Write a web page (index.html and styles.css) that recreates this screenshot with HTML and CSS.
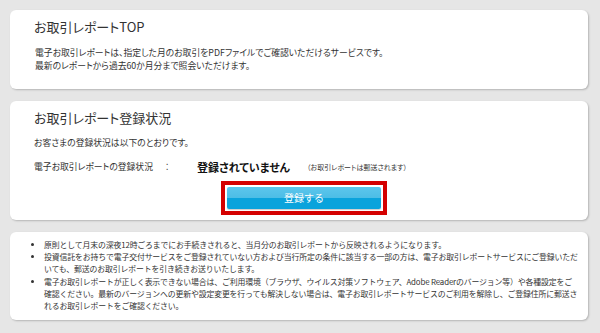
FILE: index.html
```html
<!DOCTYPE html>
<html lang="ja">
<head>
<meta charset="utf-8">
<link rel="stylesheet" href="styles.css">
</head>
<body>
<div class="page">
  <section class="card card-top">
    <h2 class="card-title">お取引レポートTOP</h2>
    <p class="text">電子お取引レポートは、指定した月のお取引をPDFファイルでご確認いただけるサービスです。<br>最新のレポートから過去60か月分まで照会いただけます。</p>
  </section>
  <section class="card card-status">
    <h2 class="card-title">お取引レポート登録状況</h2>
    <p class="text">お客さまの登録状況は以下のとおりです。</p>
    <div class="status-row">
      <span class="status-label">電子お取引レポートの登録状況</span>
      <span class="status-colon">：</span>
      <span class="status-value">登録されていません</span>
      <span class="status-note">（お取引レポートは郵送されます）</span>
    </div>
    <div class="btn-wrap">
      <div class="btn-frame"><button class="btn">登録する</button></div>
    </div>
  </section>
  <section class="card card-notes">
    <ul class="notes">
      <li>原則として月末の深夜12時ごろまでにお手続きされると、当月分のお取引レポートから反映されるようになります。</li>
      <li>投資信託をお持ちで電子交付サービスをご登録されていない方および当行所定の条件に該当する一部の方は、電子お取引レポートサービスにご登録いただいても、郵送のお取引レポートを引き続きお送りいたします。</li>
      <li>電子お取引レポートが正しく表示できない場合は、ご利用環境（ブラウザ、ウイルス対策ソフトウェア、Adobe Readerのバージョン等）や各種設定をご確認ください。最新のバージョンへの更新や設定変更を行っても解決しない場合は、電子お取引レポートサービスのご利用を解除し、ご登録住所に郵送されるお取引レポートをご確認ください。</li>
    </ul>
  </section>
</div>
</body>
</html>
```

FILE: styles.css
```css
* { box-sizing: border-box; }
html, body { margin: 0; padding: 0; }
body {
  background: #e6e6e6;
  font-family: "Noto Sans CJK JP", "Noto Sans", sans-serif;
  color: #333;
  font-feature-settings: "palt";
}
.page {
  padding: 10px 12px 10px 10px;
  display: flex;
  flex-direction: column;
  gap: 12px;
}
.card {
  background: #fff;
  border-radius: 6px;
  box-shadow: 1px 1px 2px rgba(0,0,0,0.22);
}
.card-title {
  margin: 0;
  font-size: 13px;
  font-weight: normal;
  line-height: 18px;
  color: #333;
}
.text {
  margin: 0;
  font-size: 8.8px;
  line-height: 12.5px;
}
.card-top {
  height: 79px;
  padding: 8px 14px 0 25px;
}
.card-top .card-title { margin-bottom: 11px; margin-left: -1px; }

.card-status {
  height: 119px;
  padding: 8px 14px 0 24px;
  display: flex;
  flex-direction: column;
}
.card-status .card-title { margin-bottom: 10px; }
.status-row {
  display: flex;
  align-items: center;
  margin-top: 10px;
  height: 14px;
}
.status-label { font-size: 8.8px; width: 131px; }
.status-colon { font-size: 8.8px; width: 32px; }
.status-value { font-size: 11px; font-weight: bold; color: #111; width: 110px; }
.status-note { font-size: 7px; }
.btn-wrap {
  display: flex;
  justify-content: center;
  margin-top: 7px;
}
.btn-frame {
  border: 4px solid #d40000;
  padding: 2px;
  width: 166px;
  height: 34px;
  background: #fff;
}
.btn {
  display: block;
  width: 100%;
  height: 100%;
  border: 0;
  border-radius: 2px;
  background: linear-gradient(#5cc6ec 0%, #4cbde6 50%, #0aa3dc 50%, #0aa3dc 100%);
  color: #fff;
  font-family: "Noto Sans CJK JP", sans-serif;
  font-size: 10px;
  padding: 0;
  box-shadow: 0 1px 1px rgba(0,0,0,0.2);
}

.card-notes {
  height: 88px;
  padding: 7px 9px 0 23px;
}
.notes {
  margin: 0;
  padding: 0 0 0 11px;
  font-size: 7.9px;
  line-height: 12.2px;
  letter-spacing: -0.15px;
  font-feature-settings: normal;
}
.notes li { margin: 0; }
```
